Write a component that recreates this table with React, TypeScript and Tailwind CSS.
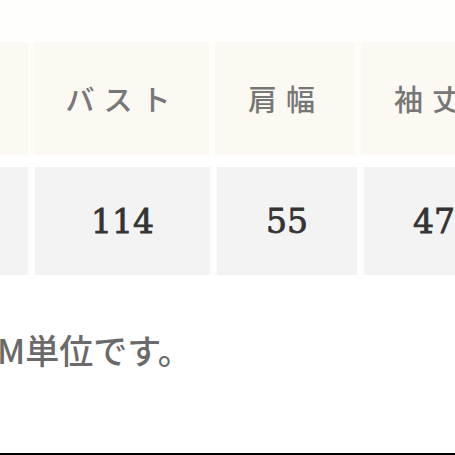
import React from "react";

const cols = [
  { w: "w-[28px]", h: "", v: "" },
  { w: "w-[175px]", h: "バスト", v: "114" },
  { w: "w-[140px]", h: "肩幅", v: "55" },
  { w: "w-[140px]", h: "袖丈", v: "47" },
];

export default function App() {
  return (
    <div className="w-[455px] h-[455px] bg-white overflow-hidden flex flex-col">
      <div className="h-[42px] shrink-0 bg-[#fefefd]" />
      <div className="flex h-[113px] shrink-0 gap-[6px] bg-[#fefdfa]">
        {cols.map((c, i) => (
          <div
            key={i}
            className={`${c.w} shrink-0 bg-[#fcf9f2] flex items-center justify-center`}
          >
            <span
              className="text-[29px] font-medium tracking-[9px] text-[#777777] leading-none pl-[2px] whitespace-nowrap"
              style={{ fontFamily: '"Noto Sans CJK JP", sans-serif' }}
            >
              {c.h}
            </span>
          </div>
        ))}
      </div>
      <div className="h-[12px] shrink-0 bg-[#fefefe]" />
      <div className="flex h-[108px] shrink-0 gap-[7px] bg-[#fdfdfd]">
        {cols.map((c, i) => (
          <div
            key={i}
            className={`${c.w} shrink-0 bg-[#f3f3f3] flex items-center justify-center`}
          >
            <span
              className="text-[33px] text-[#333333] leading-none [-webkit-text-stroke:0.8px_#333333]"
              style={{ fontFamily: '"DejaVu Serif", serif' }}
            >
              {c.v}
            </span>
          </div>
        ))}
      </div>
      <div className="h-[56px] shrink-0" />
      <div
        className="h-[38px] shrink-0 flex items-center text-[34px] font-medium text-[#6a6a6a] leading-none -ml-[3px] whitespace-nowrap"
        style={{ fontFamily: '"Noto Sans CJK JP", sans-serif' }}
      >
        M単位です。
      </div>
      <div className="flex-1" />
      <div className="h-[2px] shrink-0 bg-black" />
    </div>
  );
}
